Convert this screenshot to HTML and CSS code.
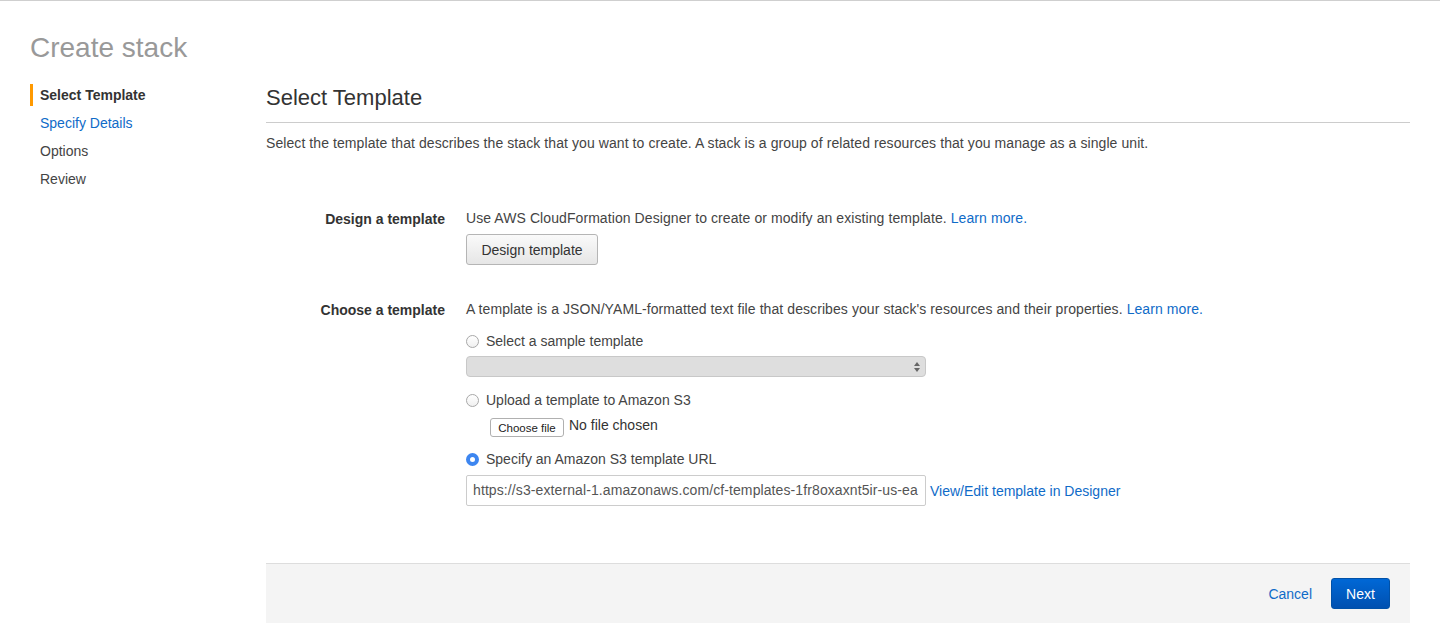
FILE: index.html
```html
<!DOCTYPE html>
<html lang="en">
<head>
<meta charset="utf-8">
<title>Create stack</title>
<link rel="stylesheet" href="styles.css">
</head>
<body>
<div class="page">
  <h1 class="page-title">Create stack</h1>
  <div class="layout">
    <nav class="steps">
      <div class="step step-active">Select Template</div>
      <a class="step step-link" href="#">Specify Details</a>
      <div class="step">Options</div>
      <div class="step">Review</div>
    </nav>
    <main class="main">
      <h2 class="section-title">Select Template</h2>
      <p class="intro">Select the template that describes the stack that you want to create. A stack is a group of related resources that you manage as a single unit.</p>

      <div class="form">
        <div class="form-row row-design">
          <div class="label">Design a template</div>
          <div class="field">
            <div class="help">Use AWS CloudFormation Designer to create or modify an existing template. <a class="link" href="#">Learn more.</a></div>
            <button class="btn btn-default">Design template</button>
          </div>
        </div>

        <div class="form-row row-choose">
          <div class="label">Choose a template</div>
          <div class="field">
            <div class="help">A template is a JSON/YAML-formatted text file that describes your stack's resources and their properties. <a class="link" href="#">Learn more.</a></div>
            <label class="radio-row r1"><span class="radio"></span><span>Select a sample template</span></label>
            <div class="select">
              <svg class="select-arrows" width="8" height="12" viewBox="0 0 8 12"><path d="M4 1 L7 5 L1 5 Z" fill="#666"/><path d="M4 11 L7 7 L1 7 Z" fill="#666"/></svg>
            </div>
            <label class="radio-row r2"><span class="radio"></span><span>Upload a template to Amazon S3</span></label>
            <div class="file-row"><span class="file-btn">Choose file</span><span class="file-name">No file chosen</span></div>
            <label class="radio-row r3"><span class="radio radio-checked"></span><span>Specify an Amazon S3 template URL</span></label>
            <div class="url-row">
              <div class="url-input">https://s3-external-1.amazonaws.com/cf-templates-1fr8oxaxnt5ir-us-ea</div>
              <a class="link" href="#">View/Edit template in Designer</a>
            </div>
          </div>
        </div>
      </div>

      <div class="footer">
        <a class="link cancel" href="#">Cancel</a>
        <button class="btn btn-primary">Next</button>
      </div>
    </main>
  </div>
</div>
</body>
</html>
```

FILE: styles.css
```css
* { box-sizing: border-box; }
html, body { margin: 0; padding: 0; background: #fff; }
body {
  border-top: 1px solid #cfcfcf;
  font-family: "Liberation Sans", Arial, Helvetica, sans-serif;
  font-size: 14px;
  color: #444;
}
.page { padding: 0 30px; }
.page-title {
  margin: 0;
  padding-top: 30px;
  font-size: 28px;
  line-height: 34px;
  font-weight: normal;
  color: #999;
}
.layout { display: flex; }
.steps {
  width: 236px;
  flex: none;
  padding-top: 19px;
  display: flex;
  flex-direction: column;
  gap: 6px;
}
.step {
  display: block;
  line-height: 22px;
  padding-left: 10px;
  color: #444;
  text-decoration: none;
}
.step-active {
  border-left: 3px solid #f90;
  padding-left: 7px;
  font-weight: bold;
  color: #333;
}
.step-link { color: #0f6bc8; }
.main { flex: 1; min-width: 0; }
.section-title {
  margin: 0;
  padding-top: 20px;
  padding-bottom: 11px;
  font-size: 22px;
  line-height: 26px;
  font-weight: normal;
  color: #333;
  border-bottom: 1px solid #ccc;
}
.intro { margin: 10px 0 0; line-height: 20px; letter-spacing: 0.08px; }
.link { color: #0f6bc8; text-decoration: none; }
.form { padding-top: 55px; }
.form-row { display: grid; grid-template-columns: 179px 1fr; column-gap: 21px; }
.row-choose { margin-top: 34px; }
.label {
  text-align: right;
  font-weight: bold;
  color: #333;
  line-height: 20px;
  padding-top: 1px;
}
.field { display: flex; flex-direction: column; align-items: flex-start; }
.help { line-height: 20px; letter-spacing: 0.08px; }
.btn {
  font-family: inherit;
  font-size: 14px;
  cursor: pointer;
}
.btn-default {
  margin-top: 6px;
  height: 31px;
  width: 132px;
  padding: 0;
  border: 1px solid #b5b5b5;
  border-radius: 3px;
  background: linear-gradient(#fafafa, #e6e6e6);
  color: #333;
}
.radio-row {
  display: flex;
  align-items: center;
  gap: 7px;
  line-height: 20px;
  color: #444;
}
.r1 { margin-top: 12px; }
.r2 { margin-top: 13px; }
.r3 { margin-top: 12px; }
.radio {
  width: 13px;
  height: 13px;
  border-radius: 50%;
  border: 1px solid #a8a8a8;
  background: linear-gradient(#fff, #f0f0f0);
  flex: none;
}
.radio-checked {
  border: 4px solid #3d86f0;
  background: #fff;
}
.select {
  margin-top: 5px;
  width: 460px;
  height: 21px;
  border: 1px solid #c8c8c8;
  border-radius: 4px;
  background: #dedede;
  display: flex;
  justify-content: flex-end;
  align-items: center;
  padding-right: 4px;
}
.file-row {
  margin-top: 5px;
  padding-left: 24px;
  display: flex;
  align-items: flex-start;
  gap: 5px;
}
.file-btn {
  height: 19px;
  width: 74px;
  border: 1px solid #b0b0b0;
  border-radius: 3px;
  background: #fff;
  font-size: 11.5px;
  color: #222;
  display: flex;
  align-items: center;
  justify-content: center;
  margin-top: 3px;
}
.file-name { color: #333; line-height: 20px; }
.url-row {
  margin-top: 6px;
  display: flex;
  align-items: center;
  gap: 4px;
}
.url-input {
  width: 460px;
  height: 31px;
  border: 1px solid #ccc;
  border-radius: 2px;
  padding: 0 6px;
  line-height: 29px;
  color: #555;
  white-space: nowrap;
  letter-spacing: 0.1px;
  background: #fff;
}
.footer {
  margin-top: 57px;
  height: 60px;
  background: #f4f4f4;
  border-top: 1px solid #ddd;
  display: flex;
  justify-content: flex-end;
  align-items: center;
  padding-right: 20px;
  gap: 19px;
}
.cancel { line-height: 20px; }
.btn-primary {
  height: 31px;
  width: 59px;
  border: 1px solid #0051a8;
  border-radius: 3px;
  background: linear-gradient(#0068d6, #0050b0);
  color: #fff;
  padding: 0;
}
```
